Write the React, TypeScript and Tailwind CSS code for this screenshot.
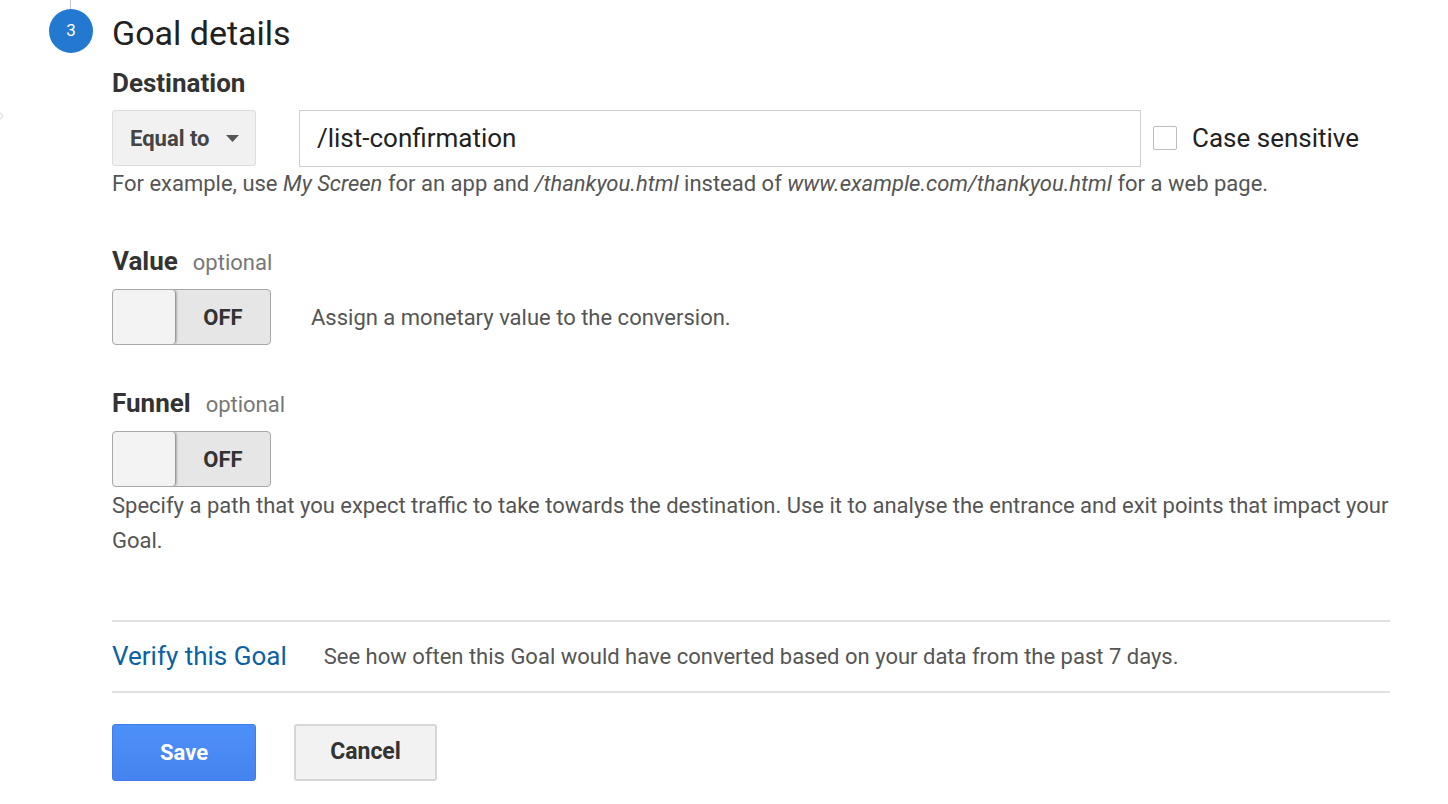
import React from "react"

function Toggle() {
  return (
    <div className="flex h-[56px] w-[159px] overflow-hidden rounded-[4px] border border-[#a8a8a8] bg-[#e6e6e6]">
      <div className="h-full w-[63px] rounded-[4px] border-r border-[#9a9a9a] bg-[#f3f3f3] shadow-[1px_0_2px_rgba(0,0,0,0.25)]" />
      <div className="flex flex-1 items-center justify-center text-[22px] font-bold text-[#333]">OFF</div>
    </div>
  )
}

export default function App() {
  return (
    <div className="relative h-[804px] w-[1448px] overflow-hidden bg-white font-['Roboto','Liberation_Sans',sans-serif]">
      <svg className="absolute left-[-4px] top-[110px]" width="10" height="12" viewBox="0 0 10 12">
        <path d="M2 1l5 5-5 5" fill="none" stroke="#e4e4e4" strokeWidth="1.5" />
      </svg>
      <div className="flex">
        <div className="flex w-[112px] flex-col pl-[49px]">
          <div className="ml-[21px] h-[9px] w-px bg-[#c8c8c8]" />
          <div className="flex h-[44px] w-[44px] items-center justify-center rounded-full bg-[#2279cf] text-[17px] text-white">
            3
          </div>
        </div>
        <div className="flex w-[1278px] flex-col">
          <h1 className="mt-[13px] text-[34px] leading-[40px] text-[#212121]">Goal details</h1>

          <div className="mt-[15px] text-[26px] font-bold leading-[30px] text-[#333]">Destination</div>
          <div className="mt-[12px] flex h-[56px] items-center">
            <button className="flex h-[56px] w-[144px] items-center gap-[16px] rounded-[3px] border border-[#dcdcdc] bg-[#f1f1f1] pl-[17px] text-[22px] font-bold text-[#444]">
              Equal to
              <svg width="13" height="7" viewBox="0 0 13 7">
                <path d="M0 0h13L6.5 7z" fill="#555" />
              </svg>
            </button>
            <div className="ml-[43px] flex h-[57px] w-[842px] items-center border border-[#cfcfcf] pl-[17px] text-[26px] text-[#222]">
              /list-confirmation
            </div>
            <div className="ml-[12px] h-[24px] w-[24px] rounded-[2px] border border-[#bdbdbd]" />
            <div className="ml-[15px] text-[26px] text-[#222]">Case sensitive</div>
          </div>
          <p className="mt-[4px] text-[22px] leading-[28px] text-[#555]">
            For example, use <i>My Screen</i> for an app and <i>/thankyou.html</i> instead of{" "}
            <i>www.example.com/thankyou.html</i> for a web page.
          </p>

          <div className="mt-[48px] flex items-baseline gap-[15px] leading-[30px]">
            <span className="text-[26px] font-bold text-[#333]">Value</span>
            <span className="text-[22px] text-[#777]">optional</span>
          </div>
          <div className="mt-[11px] flex items-center">
            <Toggle />
            <span className="ml-[40px] text-[22px] text-[#555]">Assign a monetary value to the conversion.</span>
          </div>

          <div className="mt-[43px] flex items-baseline gap-[15px] leading-[30px]">
            <span className="text-[26px] font-bold text-[#333]">Funnel</span>
            <span className="text-[22px] text-[#777]">optional</span>
          </div>
          <div className="mt-[11px]">
            <Toggle />
          </div>
          <p className="pt-[1px] text-[22px] leading-[35px] text-[#555]">
            Specify a path that you expect traffic to take towards the destination. Use it to analyse the entrance and exit points that impact your Goal.
          </p>

          <div className="mt-[62px] h-[2px] bg-[#e0e0e0]" />
          <div className="flex h-[69px] items-center">
            <span className="text-[26px] text-[#0b61a4]">Verify this Goal</span>
            <span className="ml-[37px] text-[22px] text-[#555]">
              See how often this Goal would have converted based on your data from the past 7 days.
            </span>
          </div>
          <div className="h-[2px] bg-[#e0e0e0]" />

          <div className="mt-[31px] flex gap-[38px]">
            <button className="h-[57px] w-[144px] rounded-[3px] border border-[#3d7de8] bg-gradient-to-b from-[#4d8ff9] to-[#4584ef] text-[22px] font-bold text-white">
              Save
            </button>
            <button className="h-[57px] w-[143px] rounded-[3px] border-2 border-[#d6d6d6] bg-[#f2f2f2] text-[23px] font-bold text-[#333]">
              Cancel
            </button>
          </div>
        </div>
      </div>
    </div>
  )
}
